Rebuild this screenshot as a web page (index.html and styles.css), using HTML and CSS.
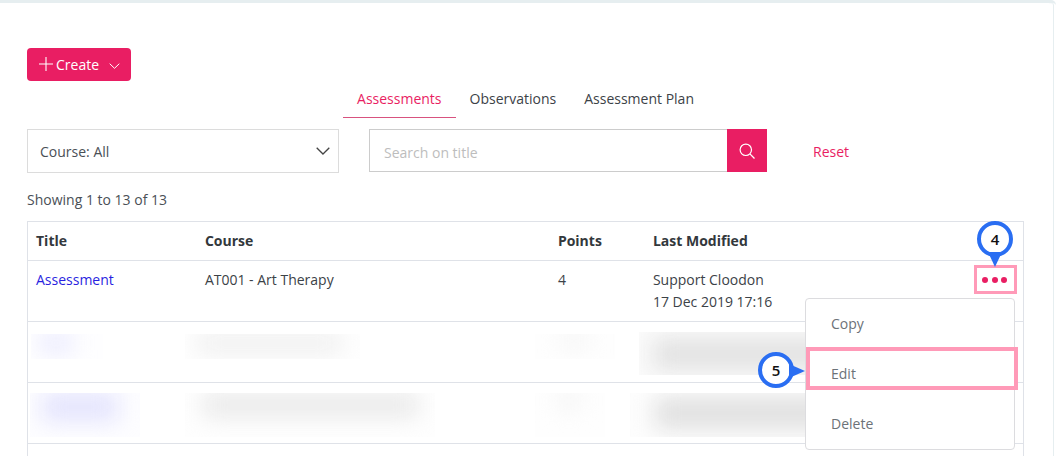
FILE: index.html
```html
<!DOCTYPE html>
<html lang="en">
<head>
<meta charset="utf-8">
<title>Assessments</title>
<link rel="stylesheet" href="styles.css">
</head>
<body>
<main class="page">
  <div class="toolbar">
    <button class="create" type="button">
      <svg class="plus" width="14" height="14" viewBox="0 0 14 14"><path d="M7 0v14M0 7h14" stroke="#fff" stroke-width="1.1" fill="none"/></svg>
      <span>Create</span>
      <svg class="caret" width="11" height="6" viewBox="0 0 11 6"><path d="M.7.7l4.8 4.6L10.300.7" stroke="#fff" stroke-width="1" fill="none"/></svg>
    </button>
  </div>
  <nav class="tabs">
    <a class="tab active">Assessments</a>
    <a class="tab">Observations</a>
    <a class="tab">Assessment Plan</a>
  </nav>
  <div class="filters">
    <div class="select">
      <span>Course: All</span>
      <svg width="14" height="8" viewBox="0 0 14 8"><path d="M.7.7L7 7l6.300-6.300" stroke="#444" stroke-width="1.300" fill="none"/></svg>
    </div>
    <div class="search">
      <div class="search-input">Search on title</div>
      <div class="search-btn">
        <svg width="16" height="16" viewBox="0 0 16 16"><circle cx="6.800" cy="6.800" r="5.700" stroke="#fff" stroke-width="1.200" fill="none"/><path d="M10.900 10.900L15.500 15.500" stroke="#fff" stroke-width="1.300"/></svg>
      </div>
    </div>
    <a class="reset">Reset</a>
  </div>
  <p class="count">Showing 1 to 13 of 13</p>
  <table class="grid">
    <colgroup><col class="c1"><col class="c2"><col class="c3"><col class="c4"><col class="c5"></colgroup>
    <thead>
      <tr><th>Title</th><th>Course</th><th>Points</th><th>Last Modified</th><th></th></tr>
    </thead>
    <tbody>
      <tr>
        <td><a class="link">Assessment</a></td>
        <td>AT001 - Art Therapy</td>
        <td>4</td>
        <td>Support Cloodon<br>17 Dec 2019 17:16</td>
        <td class="actions"><span class="dots"><i></i><i></i><i></i></span></td>
      </tr>
      <tr>
        <td><div class="patch p-title-a"><b></b></div></td>
        <td><div class="patch p-course-a"><b></b></div></td>
        <td><div class="patch p-points-a"><b></b></div></td>
        <td><div class="patch p-mod-a"><b></b></div></td>
        <td></td>
      </tr>
      <tr>
        <td><div class="patch p-title-b"><b></b></div></td>
        <td><div class="patch p-course-b"><b></b></div></td>
        <td><div class="patch p-points-b"><b></b></div></td>
        <td><div class="patch p-mod-b"><b></b></div></td>
        <td></td>
      </tr>
      <tr><td></td><td></td><td></td><td></td><td></td></tr>
    </tbody>
  </table>

  <ul class="menu">
    <li>Copy</li>
    <li>Edit</li>
    <li>Delete</li>
  </ul>
  <div class="hl hl-dots"></div>
  <div class="hl hl-edit"></div>
  <div class="pin pin-down">4</div>
  <div class="pin pin-right">5</div>
</main>
</body>
</html>
```
FILE: styles.css
```css
* { box-sizing: border-box; }
html, body { margin: 0; height: 100%; }
body {
  background: #fff;
  font-family: "Open Sans", "Liberation Sans", sans-serif;
  font-size: 14px;
  line-height: 22px;
  color: #3c4247;
  overflow: hidden;
}
.page {
  position: relative;
  width: 1056px;
  height: 456px;
  padding: 45px 32px 0 27px;
  border-top: 3px solid #e6eef0;
  border-top-right-radius: 5px;
  box-shadow: inset -2px 0 0 #fff, inset -3px 0 0 #e6eef0;
  overflow: hidden;
}
.toolbar { display: flex; height: 33px; }
.create {
  display: flex;
  align-items: center;
  width: 104px;
  height: 33px;
  padding: 0 0 0 12px;
  border: 0;
  border-radius: 4px;
  background: #e91e63;
  color: #fff;
  font: inherit;
}
.plus { margin-right: 3px; margin-top: -2px; }
.caret { margin-left: 10px; margin-top: 3px; }

.tabs { display: flex; justify-content: center; height: 37px; }
.tab { height: 37px; padding: 7px 14px 0; color: #3c4247; }
.tab.active { color: #e91e63; border-bottom: 1px solid #d8527f; }

.filters { display: flex; align-items: flex-start; margin-top: 11px; height: 44px; }
.select {
  display: flex;
  align-items: center;
  justify-content: space-between;
  width: 312px;
  height: 44px;
  padding: 2px 8px 0 12px;
  border: 1px solid #dcdcdc;
  color: #4a5056;
}
.select svg { margin-top: -3px; }
.search { display: flex; margin-left: 30px; height: 43px; }
.search-input {
  width: 358px;
  height: 43px;
  padding: 12px 14px 0;
  border: 1px solid #ccc;
  border-right: 0;
  color: #bdbdbd;
}
.search-btn {
  display: flex;
  align-items: center;
  justify-content: center;
  width: 40px;
  background: #e91e63;
}
.reset { margin-left: 46px; padding-top: 12px; color: #e91e63; }

.count { margin: 16px 0 10px; color: #4a5056; }

.grid {
  width: 997px;
  table-layout: fixed;
  border-collapse: collapse;
  border: 1px solid #dfe2e8;
}
.c1 { width: 169px; }
.c2 { width: 353px; }
.c3 { width: 95px; }
.c4 { width: 300px; }
th, td {
  padding: 8px 8px;
  text-align: left;
  vertical-align: top;
  border-top: 1px solid #dfe2e8;
}
th + th, td + td { padding-left: 8.400px; }
th { height: 39px; font-weight: 700; color: #33383c; }
td { height: 61px; position: relative; }
.link { color: #2a1fe0; }

.dots { display: flex; justify-content: flex-end; gap: 3.500px; padding: 8px 8px 0 0; }
.dots i { width: 6px; height: 6px; border-radius: 50%; background: #e91e63; }

/* redacted (blurred) table content */
.patch { position: absolute; overflow: hidden; }
.patch b { position: absolute; display: block; filter: blur(11px); }
.p-title-a { left: 3px; top: 12px; width: 72px; height: 25px; background: #fefeff; }
.p-title-a b { left: 8px; top: 0; width: 34px; height: 18px; background: #e9e9fe; }
.p-course-a { left: -12px; top: 12px; width: 175px; height: 25px; background: #fefefe; }
.p-course-a b { left: 12px; top: 0; width: 145px; height: 18px; background: #eeeeee; }
.p-points-a { left: -15px; top: 12px; width: 80px; height: 25px; background: #fefefe; }
.p-points-a b { left: 24px; top: 0; width: 30px; height: 14px; background: #f4f4f4; }
.p-mod-a { left: -6px; top: 10px; width: 167px; height: 43px; background: #fbfbfb; }
.p-mod-a b { left: 14px; top: 6px; width: 180px; height: 32px; background: #e2e2e2; }
.p-title-b { left: 2px; top: 10px; width: 110px; height: 44px; background: #fdfdff; }
.p-title-b b { left: 12px; top: 0; width: 76px; height: 28px; background: #e3e3fd; }
.p-course-b { left: -12px; top: 10px; width: 250px; height: 44px; background: #fefefe; }
.p-course-b b { left: 18px; top: 0; width: 215px; height: 24px; background: #e9e9e9; }
.p-points-b { left: -15px; top: 10px; width: 70px; height: 44px; background: #fefefe; }
.p-points-b b { left: 22px; top: 0; width: 24px; height: 16px; background: #f4f4f4; }
.p-mod-b { left: -15px; top: 10px; width: 176px; height: 44px; background: #fdfdfd; }
.p-mod-b b { left: 25px; top: 4px; width: 180px; height: 32px; background: #e0e0e0; }

.menu {
  position: absolute;
  left: 805px;
  top: 295px;
  width: 210px;
  height: 152px;
  margin: 0;
  padding: 0;
  list-style: none;
  background: #fff;
  border: 1px solid #dcdcdf;
  border-radius: 4px;
  color: #6c7278;
}
.menu li { height: 50px; padding: 14px 25px 0; }

.hl { position: absolute; border: 3px solid #ff9ab8; }
.hl-dots { left: 974px; top: 262px; width: 43px; height: 29px; }
.hl-edit { left: 806px; top: 344px; width: 212px; height: 43px; border-width: 4px; }

.pin {
  position: absolute;
  width: 36px;
  height: 36px;
  border: 4px solid #2a6ef2;
  border-radius: 50%;
  background: #fff;
  color: #111;
  font-size: 15px;
  font-weight: 600;
  line-height: 28px;
  text-align: center;
}
.pin::after { content: ""; position: absolute; width: 0; height: 0; }
.pin-down { left: 977px; top: 218px; }
.pin-down::after {
  left: 7px;
  top: 27px;
  border-left: 7px solid transparent;
  border-right: 7px solid transparent;
  border-top: 15px solid #2a6ef2;
}
.pin-right { left: 758px; top: 349px; }
.pin-right::after {
  left: 27px;
  top: 8px;
  border-top: 7px solid transparent;
  border-bottom: 7px solid transparent;
  border-left: 16px solid #2a6ef2;
}
```
